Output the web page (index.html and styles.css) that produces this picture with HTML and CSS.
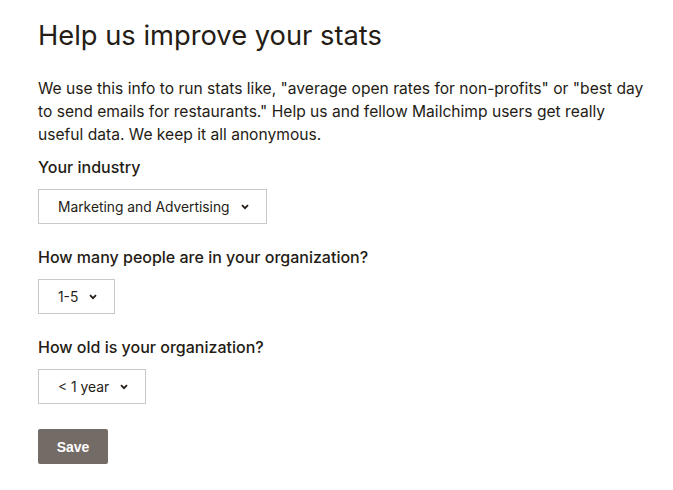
FILE: index.html
```html
<!DOCTYPE html>
<html>
<head>
<meta charset="utf-8">
<link rel="stylesheet" href="styles.css">
</head>
<body>
<main class="page">
  <h1 class="title">Help us improve your stats</h1>
  <p class="intro">We use this info to run stats like, "average open rates for non-profits" or "best day to send emails for restaurants." Help us and fellow Mailchimp users get really useful data. We keep it all anonymous.</p>
  <div class="field">
    <div class="label">Your industry</div>
    <div class="select"><span>Marketing and Advertising</span><svg class="chev" width="8" height="6" viewBox="0 0 8 6"><path d="M1 1.2 L4 4.2 L7 1.2" fill="none" stroke="#241c15" stroke-width="1.8"/></svg></div>
  </div>
  <div class="field">
    <div class="label">How many people are in your organization?</div>
    <div class="select"><span>1-5</span><svg class="chev" width="8" height="6" viewBox="0 0 8 6"><path d="M1 1.2 L4 4.2 L7 1.2" fill="none" stroke="#241c15" stroke-width="1.8"/></svg></div>
  </div>
  <div class="field">
    <div class="label">How old is your organization?</div>
    <div class="select"><span>&lt; 1 year</span><svg class="chev" width="8" height="6" viewBox="0 0 8 6"><path d="M1 1.2 L4 4.2 L7 1.2" fill="none" stroke="#241c15" stroke-width="1.8"/></svg></div>
  </div>
  <button class="save">Save</button>
</main>
</body>
</html>
```
FILE: styles.css
```css
html, body { margin: 0; padding: 0; background: #fff; }
body { font-family: Inter, "Noto Sans", sans-serif; color: #241c15; }
.page { padding: 19px 30px 0 38px; width: 612px; }
.title { font-size: 27.3px; font-weight: 400; margin: 0; line-height: 34px; }
.intro { font-size: 15.6px; line-height: 23px; margin: 24px 0 0 0; }
.field { margin-top: 10px; }
.field + .field { margin-top: 22px; }
.label { font-size: 16px; font-weight: 500; line-height: 23px; }
.select { display: inline-flex; align-items: center; gap: 11px; margin-top: 10px; height: 35px; box-sizing: border-box; border: 1px solid #c9c9c9; padding: 0 17px 0 19px; font-size: 13.8px; }
.chev { display: block; }
.save { display: block; margin-top: 25px; height: 35px; width: 70px; border: none; border-radius: 2px; background: #736b65; color: #fff; font-family: "Liberation Sans", Arial, sans-serif; font-weight: 700; font-size: 14px; padding: 0; }
```
